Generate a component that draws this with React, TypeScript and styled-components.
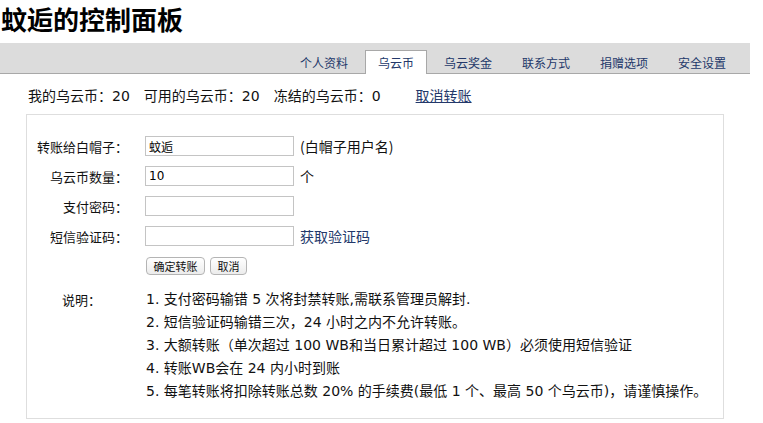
import React from "react";
import styled, { createGlobalStyle } from "styled-components";

const Global = createGlobalStyle`
  html, body { margin: 0; padding: 0; background: #fff; }
  body {
    font-family: "DejaVu Sans", Verdana, "Noto Sans CJK SC", sans-serif;
    color: #111;
    font-size: 14px;
  }
`;

const Page = styled.div`
  width: 763px;
  height: 423px;
  overflow: hidden;
`;

const Title = styled.h1`
  margin: 0;
  padding: 4px 0 0 1px;
  height: 39px;
  box-sizing: border-box;
  font-size: 26px;
  line-height: 30px;
  font-weight: bold;
  font-family: "Noto Sans CJK SC", sans-serif;
  color: #000;
`;

const TabBar = styled.div`
  width: 750px;
  height: 31px;
  margin-top: 4px;
  background: #dcdcdc;
  border-bottom: 1px solid #a8a8a8;
  box-sizing: border-box;
  display: flex;
  justify-content: flex-end;
  align-items: flex-end;
  padding-right: 11px;
  gap: 4px;
`;

const Tab = styled.div<{ $active?: boolean }>`
  height: ${(p) => (p.$active ? "24px" : "23px")};
  margin-bottom: ${(p) => (p.$active ? "-1px" : "0")};
  padding: 0 12px;
  box-sizing: border-box;
  display: flex;
  align-items: center;
  font-size: 12px;
  font-family: "Noto Sans CJK SC", sans-serif;
  color: #23386a;
  background: ${(p) => (p.$active ? "#fff" : "transparent")};
  border: 1px solid ${(p) => (p.$active ? "#a8a8a8" : "transparent")};
  border-bottom: none;
`;

const Stats = styled.div`
  display: flex;
  align-items: center;
  height: 20px;
  margin: 11px 0 0 28px;
  font-size: 14px;
`;

const Stat = styled.span`
  margin-right: 14px;
`;

const CancelLink = styled.a`
  margin-left: 21px;
  color: #23386a;
  text-decoration: underline;
  font-family: "Noto Sans CJK SC", sans-serif;
`;

const Panel = styled.div`
  margin: 9px 0 0 26px;
  width: 698px;
  height: 305px;
  box-sizing: border-box;
  border: 1px solid #dedede;
  padding-top: 16px;
`;

const Row = styled.div`
  display: flex;
  align-items: center;
  height: 30px;
`;

const Label = styled.div`
  width: 101px;
  text-align: right;
  margin-right: 17px;
  font-family: "Noto Sans CJK SC", sans-serif;
  font-size: 13px;
`;

const Input = styled.input`
  width: 149px;
  height: 20px;
  box-sizing: border-box;
  border: 1px solid #c4c4c4;
  padding: 0 3px;
  font-size: 12px;
  font-family: "DejaVu Sans", "Noto Sans CJK SC", sans-serif;
  color: #000;
  outline: none;
`;

const After = styled.span<{ $link?: boolean }>`
  margin-left: 6px;
  color: ${(p) => (p.$link ? "#23386a" : "#111")};
  font-family: "Noto Sans CJK SC", sans-serif;
  font-size: 14px;
`;

const Buttons = styled.div`
  display: flex;
  gap: 5px;
  margin-left: 119px;
`;

const Button = styled.button`
  height: 18px;
  padding: 0 6.5px;
  border: 1px solid #b4b4b4;
  border-radius: 4px;
  background: linear-gradient(#ffffff, #ececec);
  font-size: 11px;
  font-family: "Noto Sans CJK SC", sans-serif;
  color: #111;
  line-height: 16px;
`;

const Notes = styled.div`
  display: flex;
  margin-top: 7px;
`;

const NotesLabel = styled.div`
  width: 74px;
  text-align: right;
  margin-right: 45px;
  font-family: "Noto Sans CJK SC", sans-serif;
  font-size: 13px;
  line-height: 23px;
`;

const NoteList = styled.ol`
  margin: 0;
  padding: 0;
  list-style: none;
`;

const Note = styled.li`
  line-height: 23px;
  font-size: 14px;
  white-space: nowrap;
`;

const tabs = ["个人资料", "乌云币", "乌云奖金", "联系方式", "捐赠选项", "安全设置"];

const notes = [
  "1. 支付密码输错 5 次将封禁转账,需联系管理员解封.",
  "2. 短信验证码输错三次，24 小时之内不允许转账。",
  "3. 大额转账（单次超过 100 WB和当日累计超过 100 WB）必须使用短信验证",
  "4. 转账WB会在 24 内小时到账",
  "5. 每笔转账将扣除转账总数 20% 的手续费(最低 1 个、最高 50 个乌云币)，请谨慎操作。",
];

export default function App() {
  return (
    <Page>
      <Global />
      <Title>蚊逅的控制面板</Title>
      <TabBar>
        {tabs.map((t) => (
          <Tab key={t} $active={t === "乌云币"}>
            {t}
          </Tab>
        ))}
      </TabBar>
      <Stats>
        <Stat>我的乌云币：20</Stat>
        <Stat>可用的乌云币：20</Stat>
        <Stat>冻结的乌云币：0</Stat>
        <CancelLink href="#">取消转账</CancelLink>
      </Stats>
      <Panel>
        <Row>
          <Label>转账给白帽子：</Label>
          <Input defaultValue="蚊逅" />
          <After>(白帽子用户名)</After>
        </Row>
        <Row>
          <Label>乌云币数量：</Label>
          <Input defaultValue="10" />
          <After>个</After>
        </Row>
        <Row>
          <Label>支付密码：</Label>
          <Input type="password" />
        </Row>
        <Row>
          <Label>短信验证码：</Label>
          <Input />
          <After $link>获取验证码</After>
        </Row>
        <Row>
          <Buttons>
            <Button>确定转账</Button>
            <Button>取消</Button>
          </Buttons>
        </Row>
        <Notes>
          <NotesLabel>说明：</NotesLabel>
          <NoteList>
            {notes.map((n) => (
              <Note key={n}>{n}</Note>
            ))}
          </NoteList>
        </Notes>
      </Panel>
    </Page>
  );
}
